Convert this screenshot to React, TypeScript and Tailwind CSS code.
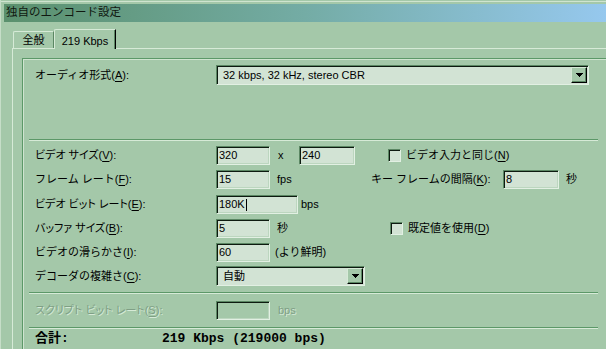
import React from "react";

// sunken edit box used for every numeric field
const Field = ({
  w,
  value,
  disabled,
  caret,
}: {
  w: string;
  value?: string;
  disabled?: boolean;
  caret?: boolean;
}) => (
  <div
    className={`${w} h-[19px] shrink-0 border border-t-[#5b8763] border-l-[#5b8763] border-b-[#e2f0e3] border-r-[#e2f0e3] shadow-[inset_1px_1px_0_#0d1a10,inset_-1px_-1px_0_#bcd6bf] flex items-center pl-[2px] leading-none ${
      disabled ? "bg-[#a4c8a9]" : "bg-[#d2e3d4]"
    }`}
  >
    {value}
    {caret && <span className="inline-block w-[1px] h-[12px] bg-black ml-[1px]" />}
  </div>
);

const Combo = ({ w, value }: { w: string; value: string }) => (
  <div
    className={`${w} h-[20px] shrink-0 border border-t-[#5b8763] border-l-[#5b8763] border-b-[#e2f0e3] border-r-[#e2f0e3] shadow-[inset_1px_1px_0_#0d1a10] bg-[#d2e3d4] flex items-center p-[1px] pl-[2px]`}
  >
    <span className="flex-1 leading-none pl-[4px]">{value}</span>
    <div className="w-[16px] h-[16px] bg-[#a4c8a9] border border-t-[#d6ead7] border-l-[#d6ead7] border-b-black border-r-black shadow-[inset_-1px_-1px_0_#5b8763] flex items-center justify-center">
      <svg width="7" height="4" viewBox="0 0 7 4" shapeRendering="crispEdges">
        <path d="M0 0h7v1h-1v1h-1v1h-1v1h-1v-1h-1v-1h-1v-1h-1z" fill="#000" />
      </svg>
    </div>
  </div>
);

const Check = () => (
  <div className="w-[13px] h-[13px] shrink-0 border border-t-[#5b8763] border-l-[#5b8763] border-b-[#e2f0e3] border-r-[#e2f0e3] shadow-[inset_1px_1px_0_#0d1a10] bg-[#d2e3d4]" />
);

const Key = ({
  text,
  k,
  colon = true,
  tight,
}: {
  text: string;
  k: string;
  colon?: boolean;
  tight?: boolean;
}) => (
  <span className="whitespace-nowrap">
    <span className={tight ? "[font-feature-settings:'palt']" : ""}>{text}</span>(
    <span className="underline underline-offset-[2px]">{k}</span>){colon ? ":" : ""}
  </span>
);

const Separator = ({ mt }: { mt: string }) => (
  <div className={`${mt} -ml-[6px] w-[569px] h-[2px] border-t border-t-[#5c9868] border-b border-b-[#d6ead7]`} />
);

const Label = ({ children, w = "w-[181px]" }: { children: React.ReactNode; w?: string }) => (
  <div className={`${w} h-[19px] shrink-0 flex items-center`}>{children}</div>
);

const Cell = ({ children, cls = "" }: { children: React.ReactNode; cls?: string }) => (
  <div className={`h-[19px] shrink-0 flex items-center whitespace-nowrap ${cls}`}>{children}</div>
);

export default function App() {
  return (
    <div className="w-[606px] h-[349px] overflow-hidden bg-[#a4c8a9] text-[11px] text-black font-['Liberation_Sans','Noto_Sans_CJK_JP',sans-serif] flex flex-col border-l border-l-[#c6dec8]">
      {/* window edge */}
      <div className="h-[1px] mt-[1px] bg-[#cfe4d0] shrink-0" />

      {/* Title bar */}
      <div className="ml-[3px] mt-[2px] h-[18px] shrink-0 bg-gradient-to-r from-[#5a906d] via-[#74aca5] to-[#96c8ee] flex items-center pl-[2px] text-[11.5px] text-[#101810]">
        独自のエンコード設定
      </div>

      {/* Tabs */}
      <div className="ml-[12px] mt-[7px] h-[19px] shrink-0 flex items-end relative z-10">
        <div className="w-[41px] h-[17px] border-t border-l border-[#d6ead7] border-r border-r-[#5b8763] rounded-tl-[2px] flex items-center justify-center pt-[1px]">
          全般
        </div>
        <div className="w-[62px] h-[20px] -mb-[1px] bg-[#a4c8a9] border-t border-l border-[#d6ead7] border-r border-r-black shadow-[inset_-1px_0_0_#5b8763] rounded-tl-[2px] flex items-start justify-center pt-[3px]">
          219 Kbps
        </div>
      </div>

      {/* Tab panel */}
      <div className="ml-[11px] flex-1 border-t border-l border-[#d6ead7] flex flex-col">
        {/* group frame */}
        <div className="ml-[9px] mt-[9px] flex-1 border-t border-l border-[#5c9868] shadow-[inset_1px_1px_0_#cfe4d0] pl-[12px] pt-[6px] flex flex-col">
          <div className="flex h-[20px] shrink-0">
            <div className="w-[181px] h-[20px] flex items-center">
              <Key text="オーディオ形式" k="A" />
            </div>
            <Combo w="w-[373px]" value="32 kbps, 32 kHz, stereo CBR" />
          </div>

          <Separator mt="mt-[54px]" />

          {/* video size */}
          <div className="flex h-[24px] shrink-0 mt-[5px]">
            <Label>
              <Key text="ビデオ サイズ" k="V" tight />
            </Label>
            <Field w="w-[54px]" value="320" />
            <Cell cls="w-[29px] pl-[8px]">x</Cell>
            <Field w="w-[56px]" value="240" />
            <Cell cls="ml-[33px]">
              <Check />
              <span className="ml-[5px]">
                <Key text="ビデオ入力と同じ" k="N" colon={false} />
              </span>
            </Cell>
          </div>

          {/* frame rate */}
          <div className="flex h-[25px] shrink-0">
            <Label>
              <Key text="フレーム レート" k="F" />
            </Label>
            <Field w="w-[54px]" value="15" />
            <Cell cls="w-[101px] pl-[7px]">fps</Cell>
            <Label w="w-[132px]">
              <Key text="キー フレームの間隔" k="K" />
            </Label>
            <Field w="w-[56px]" value="8" />
            <Cell cls="pl-[7px]">秒</Cell>
          </div>

          {/* bit rate */}
          <div className="flex h-[24px] shrink-0">
            <Label>
              <Key text="ビデオ ビット レート" k="E" tight />
            </Label>
            <Field w="w-[82px]" value="180K" caret />
            <Cell cls="pl-[3px]">bps</Cell>
          </div>

          {/* buffer */}
          <div className="flex h-[24px] shrink-0">
            <Label>
              <Key text="バッファ サイズ" k="B" tight />
            </Label>
            <Field w="w-[54px]" value="5" />
            <Cell cls="w-[120px] pl-[7px]">秒</Cell>
            <Cell>
              <Check />
              <span className="ml-[5px]">
                <Key text="既定値を使用" k="D" colon={false} />
              </span>
            </Cell>
          </div>

          {/* smoothness */}
          <div className="flex h-[23px] shrink-0">
            <Label>
              <Key text="ビデオの滑らかさ" k="I" />
            </Label>
            <Field w="w-[54px]" value="60" />
            <Cell cls="pl-[5px]">(より鮮明)</Cell>
          </div>

          {/* decoder */}
          <div className="flex h-[20px] shrink-0">
            <div className="w-[181px] h-[20px] flex items-center">
              <Key text="デコーダの複雑さ" k="C" />
            </div>
            <Combo w="w-[149px]" value="自動" />
          </div>

          <Separator mt="mt-[6px]" />

          {/* script bit rate (disabled) */}
          <div className="flex h-[19px] shrink-0 mt-[7px] text-[#7f9f85] [text-shadow:1px_1px_0_#d6ead7]">
            <Label>
              <Key text="スクリプト ビット レート" k="S" tight />
            </Label>
            <Field w="w-[54px]" disabled />
            <Cell cls="pl-[8px]">bps</Cell>
          </div>

          <Separator mt="mt-[7px]" />

          {/* total */}
          <div className="flex h-[18px] shrink-0 mt-[1px] items-center font-bold text-[13px] font-['Liberation_Mono','Noto_Sans_CJK_JP',monospace]">
            <div className="w-[127px] shrink-0">合計:</div>
            <div className="whitespace-nowrap">219 Kbps (219000 bps)</div>
          </div>
        </div>
      </div>
    </div>
  );
}
